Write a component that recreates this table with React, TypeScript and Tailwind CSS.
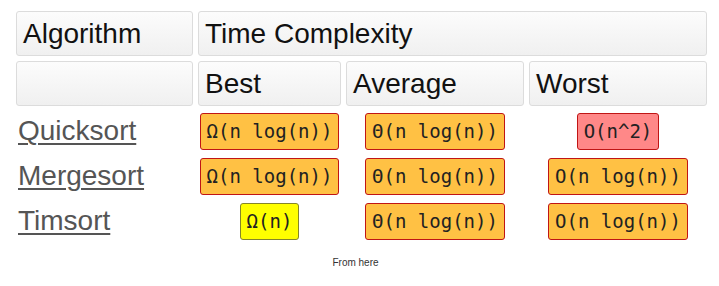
const rows = [
  {
    name: "Quicksort",
    best: { text: "Ω(n log(n))", kind: "mid" },
    average: { text: "Θ(n log(n))", kind: "mid" },
    worst: { text: "O(n^2)", kind: "bad" },
  },
  {
    name: "Mergesort",
    best: { text: "Ω(n log(n))", kind: "mid" },
    average: { text: "Θ(n log(n))", kind: "mid" },
    worst: { text: "O(n log(n))", kind: "mid" },
  },
  {
    name: "Timsort",
    best: { text: "Ω(n)", kind: "good" },
    average: { text: "Θ(n log(n))", kind: "mid" },
    worst: { text: "O(n log(n))", kind: "mid" },
  },
];

const badgeStyles: Record<string, string> = {
  mid: "bg-[#ffc144] border-[#c01515]",
  bad: "bg-[#ff8888] border-[#c01515]",
  good: "bg-[#ffff00] border-[#85852a]",
};

function HeadCell({ children, className = "" }: { children?: React.ReactNode; className?: string }) {
  return (
    <div
      className={`flex items-center rounded-[3px] border border-[#dcdcdc] bg-gradient-to-b from-[#fcfcfc] to-[#f0f0f0] pl-[6px] text-[28px] text-[#111] ${className}`}
    >
      {children}
    </div>
  );
}

function Badge({ text, kind }: { text: string; kind: string }) {
  return (
    <div className="flex items-center justify-center">
      <span
        className={`rounded-[3px] border px-[6px] py-[6px] font-['DejaVu_Sans_Mono',monospace] text-[19px] leading-[23px] whitespace-pre text-[#222] ${badgeStyles[kind]}`}
      >
        {text}
      </span>
    </div>
  );
}

export default function App() {
  return (
    <div className="h-[286px] w-[719px] bg-white font-['Liberation_Sans',Arial,sans-serif]">
      <div className="pl-4 pt-[11px]">
        <div className="grid grid-cols-[177px_143px_178px_178px] grid-rows-[45px_45px_40px_40px_40px] gap-[5px]">
          <HeadCell>Algorithm</HeadCell>
          <HeadCell className="col-span-3">Time Complexity</HeadCell>
          <HeadCell />
          <HeadCell>Best</HeadCell>
          <HeadCell>Average</HeadCell>
          <HeadCell>Worst</HeadCell>

          {rows.map((row) => (
            <div key={row.name} className="contents">
              <div className="flex items-center pl-[2px]">
                <a
                  href="#"
                  className="text-[28px] text-[#555] underline decoration-2 underline-offset-[3px]"
                >
                  {row.name}
                </a>
              </div>
              <Badge {...row.best} />
              <Badge {...row.average} />
              <Badge {...row.worst} />
            </div>
          ))}
        </div>
      </div>

      <div className="flex justify-center pr-[8px] pt-[14px] text-[10px] text-[#333]">
        From here
      </div>
    </div>
  );
}
